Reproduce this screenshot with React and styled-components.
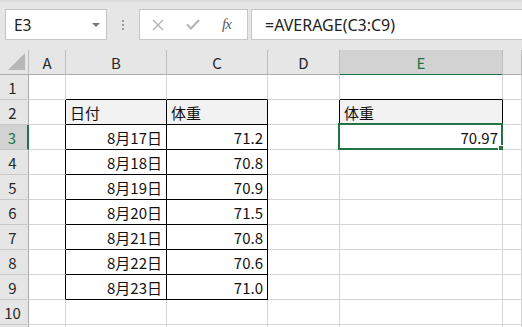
import React from 'react'
import styled, { createGlobalStyle } from 'styled-components'

const GlobalStyle = createGlobalStyle`
  html, body {
    margin: 0;
    padding: 0;
    background: #fff;
    height: 327px;
    overflow: hidden;
  }
  body {
    font-family: "Noto Sans", "Noto Sans CJK JP", sans-serif;
  }
`

const COLS = ['A', 'B', 'C', 'D', 'E', 'F']
const WIDTHS = '29px 37px 101px 101px 72px 163px 1fr'
const ROWS = [1, 2, 3, 4, 5, 6, 7, 8, 9, 10, 11]

const CELLS = {
  B2: { text: '日付', head: true },
  C2: { text: '体重', head: true },
  B3: { text: '8月17日' }, C3: { text: '71.2' },
  B4: { text: '8月18日' }, C4: { text: '70.8' },
  B5: { text: '8月19日' }, C5: { text: '70.9' },
  B6: { text: '8月20日' }, C6: { text: '71.5' },
  B7: { text: '8月21日' }, C7: { text: '70.8' },
  B8: { text: '8月22日' }, C8: { text: '70.6' },
  B9: { text: '8月23日' }, C9: { text: '71.0' },
  E2: { text: '体重', head: true },
  E3: { text: '70.97' },
}

const visibleCol = c => c !== 'F'
const visibleRow = r => r <= 10

const inBox = (c, r) => {
  if ((c === 'B' || c === 'C') && r >= 2 && r <= 9) return true
  if (c === 'E' && r === 2) return true
  return false
}

const Toolbar = styled.div`
  height: 50px;
  box-sizing: border-box;
  background: linear-gradient(#d8d8d8 0, #e6e6e6 3px);
  display: flex;
  align-items: flex-start;
  padding-top: 9px;
  padding-left: 5px;
`

const NameBox = styled.div`
  width: 102px;
  height: 31px;
  box-sizing: border-box;
  background: #fff;
  border: 1px solid #c6c6c6;
  display: flex;
  align-items: center;
  justify-content: space-between;
  padding: 0 6px 0 8px;
  font-size: 15.5px;
  color: #222;
`

const Caret = styled.span`
  width: 0;
  height: 0;
  border-left: 4px solid transparent;
  border-right: 4px solid transparent;
  border-top: 4px solid #777;
`

const Grip = styled.div`
  width: 32px;
  height: 31px;
  display: flex;
  flex-direction: column;
  align-items: center;
  justify-content: center;
  gap: 2px;

  span {
    width: 2px;
    height: 2px;
    background: #9a9a9a;
  }
`

const Buttons = styled.div`
  width: 109px;
  height: 31px;
  box-sizing: border-box;
  background: #fff;
  border: 1px solid #c6c6c6;
  display: flex;
  align-items: center;
  padding-left: 12px;
  gap: 22px;
`

const Fx = styled.span`
  font-family: "Liberation Serif", serif;
  font-style: italic;
  font-size: 15px;
  color: #5a5a5a;
  letter-spacing: -1px;
`

const FormulaInput = styled.div`
  flex: 1;
  margin-left: 3px;
  height: 31px;
  box-sizing: border-box;
  background: #fff;
  border: 1px solid #c6c6c6;
  border-right: none;
  display: flex;
  align-items: center;
  padding-left: 13px;
  font-size: 16px;
  color: #222;
`

const Sheet = styled.div`
  display: grid;
  grid-template-columns: ${WIDTHS};
  grid-auto-rows: 25px;
  font-family: "Noto Sans CJK JP", "Noto Sans", sans-serif;
  font-size: 15px;
`

const Corner = styled.div`
  background: #e6e6e6;
  border-right: 1px solid #bdbdbd;
  border-bottom: 1px solid #ababab;
  box-sizing: border-box;
  display: flex;
  align-items: flex-end;
  justify-content: flex-end;
  padding: 0 3px 4px 0;

  span {
    width: 0;
    height: 0;
    border-left: 17px solid transparent;
    border-bottom: 17px solid #b7b7b7;
  }
`

const ColHead = styled.div`
  box-sizing: border-box;
  background: ${p => (p.$active ? '#d2d2d2' : '#e6e6e6')};
  color: ${p => (p.$active ? '#217346' : '#262626')};
  border-right: 1px solid #bdbdbd;
  border-bottom: ${p => (p.$active ? '2px solid #217346' : '1px solid #ababab')};
  margin-bottom: ${p => (p.$active ? '-1px' : '0')};
  display: flex;
  align-items: center;
  justify-content: center;
  padding-top: 1px;
`

const RowHead = styled.div`
  box-sizing: border-box;
  background: ${p => (p.$active ? '#d2d2d2' : '#e6e6e6')};
  color: ${p => (p.$active ? '#217346' : '#262626')};
  border-right: ${p => (p.$active ? '2px solid #217346' : '1px solid #ababab')};
  border-bottom: 1px solid #c8c8c8;
  display: flex;
  align-items: center;
  justify-content: center;
  padding-right: 3px;
`

const Cell = styled.div`
  position: relative;
  box-sizing: border-box;
  background: ${p => (p.$head ? '#f2f2f2' : '#fff')};
  border-right: 1px solid ${p => (p.$r ? '#000' : '#d4d4d4')};
  border-bottom: 1px solid ${p => (p.$b ? '#000' : '#d4d4d4')};
  display: flex;
  align-items: center;
  justify-content: ${p => (p.$head ? 'flex-start' : 'flex-end')};
  padding: 0 4px;
  color: #111;
  white-space: nowrap;
`

const Selection = styled.div`
  position: absolute;
  top: -2px;
  left: -2px;
  right: -1px;
  bottom: -1px;
  border: 2px solid #217346;
  pointer-events: none;
`

const Handle = styled.div`
  position: absolute;
  right: -4px;
  bottom: -4px;
  width: 5px;
  height: 5px;
  background: #217346;
  border: 1px solid #fff;
`

const Cross = () => (
  <svg width="12" height="12" viewBox="0 0 12 12">
    <path d="M1 1 L11 11 M11 1 L1 11" stroke="#b3b3b3" strokeWidth="1.4" fill="none" />
  </svg>
)

const Check = () => (
  <svg width="14" height="11" viewBox="0 0 14 11">
    <path d="M1 5.5 L5 9.5 L13 1" stroke="#b3b3b3" strokeWidth="2" fill="none" />
  </svg>
)

const App = () => {
  return (
    <>
      <GlobalStyle />
      <Toolbar>
        <NameBox>
          E3
          <Caret />
        </NameBox>
        <Grip><span /><span /><span /></Grip>
        <Buttons>
          <Cross />
          <Check />
          <Fx>fx</Fx>
        </Buttons>
        <FormulaInput>=AVERAGE(C3:C9)</FormulaInput>
      </Toolbar>

      <Sheet>
        <Corner><span /></Corner>
        {COLS.map(c => (
          <ColHead key={c} $active={c === 'E'}>{visibleCol(c) && c}</ColHead>
        ))}
        {ROWS.map(r => (
          <React.Fragment key={r}>
            <RowHead $active={r === 3}>{visibleRow(r) && r}</RowHead>
            {COLS.map((c, i) => {
              const id = c + r
              const cell = CELLS[id]
              const next = COLS[i + 1]
              return (
                <Cell
                  key={id}
                  $head={cell && cell.head}
                  $r={inBox(c, r) || (next && inBox(next, r))}
                  $b={inBox(c, r) || inBox(c, r + 1)}
                >
                  {cell && cell.text}
                  {id === 'E3' && (
                    <Selection>
                      <Handle />
                    </Selection>
                  )}
                </Cell>
              )
            })}
          </React.Fragment>
        ))}
      </Sheet>
    </>
  )
}

export default App
